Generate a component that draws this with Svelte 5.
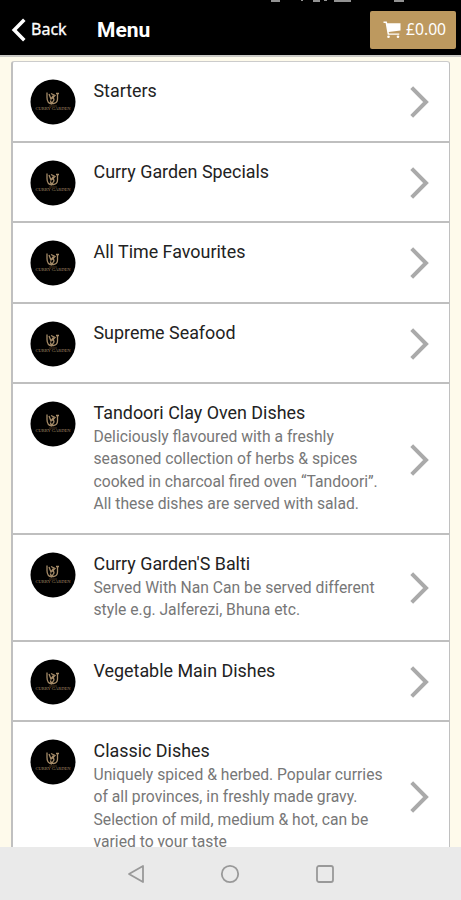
<script>
  const categories = [
    { name: 'Starters' },
    { name: 'Curry Garden Specials' },
    { name: 'All Time Favourites' },
    { name: 'Supreme Seafood' },
    {
      name: 'Tandoori Clay Oven Dishes',
      lines: [
        'Deliciously flavoured with a freshly',
        'seasoned collection of herbs & spices',
        'cooked in charcoal fired oven “Tandoori”.',
        'All these dishes are served with salad.'
      ]
    },
    {
      name: "Curry Garden'S Balti",
      lines: ['Served With Nan Can be served different', 'style e.g. Jalferezi, Bhuna etc.']
    },
    { name: 'Vegetable Main Dishes' },
    {
      name: 'Classic Dishes',
      lines: [
        'Uniquely spiced & herbed. Popular curries',
        'of all provinces, in freshly made gravy.',
        'Selection of mild, medium & hot, can be',
        'varied to your taste'
      ]
    }
  ];

  let total = $state(0);
</script>

<div class="screen">
  <header class="top-bar">
    <!-- lower edge of the status icons, cut off by the screen -->
    <svg class="status" viewBox="0 0 461 3" aria-hidden="true">
      <path d="M271 0h9v2h-9zM301 0h2v1h-2zM313 0h7v2h-7zM324 0h3v1h-3zM334 0h17v2h-17zM394 0h10v2h-10z" />
    </svg>
    <button class="back">
      <svg width="15" height="24" viewBox="0 0 15 24">
        <path d="M13.300 1.800 3.200 12l10.100 10.200" fill="none" stroke="#fff" stroke-width="3.500" />
      </svg>
      <span>Back</span>
    </button>
    <h1>Menu</h1>
    <button class="basket">
      <svg width="18" height="18" viewBox="0 0 18 18">
        <path d="M.5.500h3.300l.5 1.700h13.200v7.200L5.700 10.900l.3 1.500h10.300v1.400H4.700L2.600 1.900H.5z" />
        <circle cx="5.500" cy="15.800" r="1.300" />
        <circle cx="15" cy="15.800" r="1.300" />
      </svg>
      <span>£{total.toFixed(2)}</span>
    </button>
  </header>

  <main>
    <ul class="list">
      {#each categories as category}
        <li class="row">
          <svg class="logo" viewBox="0 0 46 46">
            <circle cx="23" cy="23" r="22.500" />
            <g fill="none" stroke="#a58b68">
              <path
                d="M17 13.500v5q0 6 5 6.500M19 15l2 5 2-3 1 4-2 3M21 14.500l4 2-3 3M27.500 14v6q0 4-4 4.500-3 0-3-3M26 14.500h3"
                stroke-width="1.300"
              />
              <path d="M19 27h8" stroke="#65472d" stroke-width=".7" />
            </g>
            <text x="23" y="31" textLength="35" lengthAdjust="spacingAndGlyphs">CURRY GARDEN</text>
          </svg>
          <div class="info">
            <h2>{category.name}</h2>
            {#if category.lines}
              <p>
                {#each category.lines as line}
                  <span>{line}</span>
                {/each}
              </p>
            {/if}
          </div>
          <svg class="arrow" width="19" height="32" viewBox="0 0 19 32">
            <path d="M1.700 1.700 16 16 1.700 30.300" fill="none" stroke="#aaa" stroke-width="4" />
          </svg>
        </li>
      {/each}
    </ul>
  </main>

  <nav class="system-nav">
    <svg width="18" height="20" viewBox="0 0 18 20">
      <path d="M16 2v16L2 10z" />
    </svg>
    <svg width="20" height="20" viewBox="0 0 20 20">
      <circle cx="10" cy="10" r="8.200" />
    </svg>
    <svg width="20" height="20" viewBox="0 0 20 20">
      <rect x="2" y="2" width="16" height="16" rx="2" />
    </svg>
  </nav>
</div>

<style>
  :global(body) {
    background: #fff;
  }

  .screen {
    height: 900px;
    display: flex;
    flex-direction: column;
    overflow: hidden;
    background: #fefaeb;
    font-family: Roboto, sans-serif;
  }

  .top-bar {
    position: relative;
    flex: none;
    display: flex;
    align-items: center;
    box-sizing: border-box;
    height: 57px;
    padding: 5px 5px 0 11px;
    background: #000;
    border-bottom: 2px solid #c9c8c4;
    color: #fff;
  }

  .status {
    position: absolute;
    top: 0;
    left: 0;
    width: 461px;
    height: 3px;
    fill: #929292;
  }

  button {
    display: flex;
    align-items: center;
    margin: 0;
    padding: 0;
    border: 0;
    background: none;
    color: #fff;
    font-family: 'Noto Sans', sans-serif;
  }

  .back {
    width: 86px;
    gap: 5px;
    font-size: 16px;
  }

  .back span {
    margin-top: -2px;
    -webkit-text-stroke: 0.3px #fff;
  }

  h1 {
    flex: 1;
    margin: 0;
    font-size: 21px;
    font-weight: 700;
  }

  .basket {
    box-sizing: border-box;
    width: 86px;
    height: 38px;
    padding-left: 13px;
    gap: 5px;
    border-radius: 2px;
    background: #bd995f;
    font-size: 15.700px;
  }

  .basket svg {
    fill: #fff;
  }

  .basket span {
    margin-top: -2px;
  }

  main {
    flex: 1;
    min-height: 0;
    overflow: hidden;
    padding: 4px 11px 0;
  }

  .list {
    margin: 0;
    padding: 0;
    list-style: none;
    background: #fff;
    border: 1px solid #c0c0c0;
    border-left-width: 2px;
    border-top-color: #ccc;
    border-radius: 3px 3px 0 0;
  }

  .row {
    display: flex;
    box-sizing: border-box;
    min-height: 80.500px;
    padding: 17px 20px 15.600px 17px;
    border-bottom: 2px solid #bfbfbf;
  }

  .logo {
    flex: none;
    width: 46px;
    height: 46px;
  }

  .logo text {
    fill: #a58b68;
    font-family: 'Liberation Serif', serif;
    font-size: 4.500px;
    text-anchor: middle;
  }

  .info {
    flex: 1;
    padding-left: 17.500px;
    white-space: nowrap;
  }

  h2 {
    margin: 0;
    font-size: 17.900px;
    font-weight: 400;
    line-height: 24px;
    color: #222;
  }

  p {
    margin: 0;
    padding: 0.700px 0 2.300px;
    font-size: 15.700px;
    line-height: 22.350px;
    color: #777;
  }

  p span {
    display: block;
  }

  .arrow {
    flex: none;
    align-self: center;
  }

  .system-nav {
    flex: none;
    display: flex;
    align-items: center;
    justify-content: center;
    gap: 75px;
    height: 53px;
    background: #eaeaea;
  }

  .system-nav svg {
    fill: none;
    stroke: #999;
    stroke-width: 1.800;
    stroke-linejoin: round;
  }
</style>
